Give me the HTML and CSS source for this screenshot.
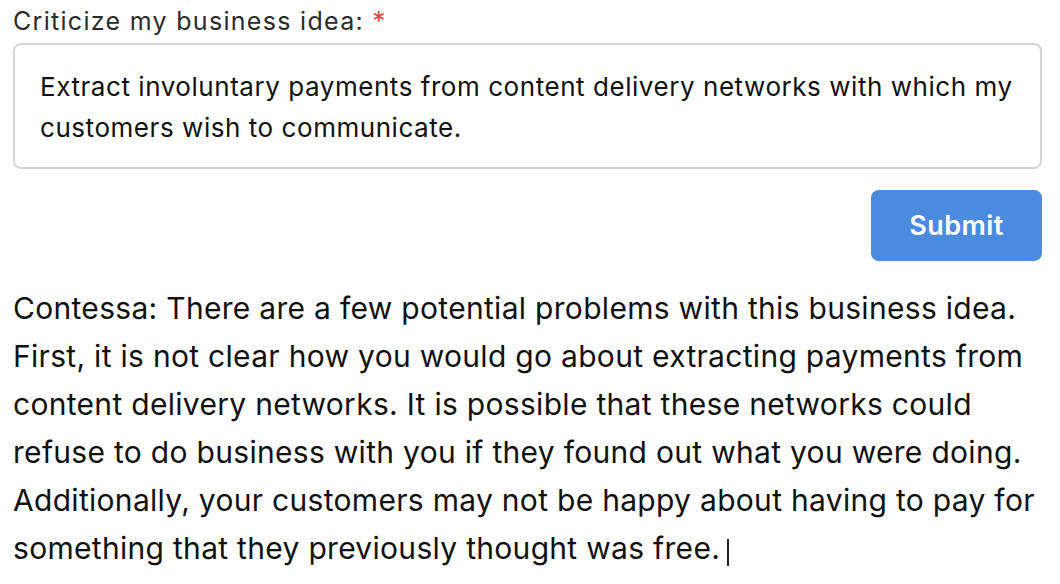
FILE: index.html
```html
<!DOCTYPE html>
<html lang="en">
<head>
<meta charset="utf-8">
<title>Criticize my business idea</title>
<link rel="stylesheet" href="styles.css">
</head>
<body>
<form class="form">
  <label class="label" for="idea">Criticize my business idea: <span class="req">*</span></label>
  <div class="input" id="idea" role="textbox">Extract involuntary payments from content delivery networks with which my<br>customers wish to communicate.</div>
  <div class="actions">
    <button type="button" class="submit">Submit</button>
  </div>
</form>
<p class="answer">Contessa: There are a few potential problems with this business idea.<br>First, it is not clear how you would go about extracting payments from<br>content delivery networks. It is possible that these networks could<br>refuse to do business with you if they found out what you were doing.<br>Additionally, your customers may not be happy about having to pay for<br>something that they previously thought was free.<span class="caret"></span></p>
</body>
</html>
```

FILE: styles.css
```css
html, body {
  margin: 0;
  padding: 0;
  background: #ffffff;
}
body {
  font-family: Inter, "Noto Sans", "Liberation Sans", sans-serif;
  color: #000;
  padding: 0 18px 0 13px;
}
.form {
  display: flex;
  flex-direction: column;
}
.label {
  font-size: 25px;
  line-height: 28px;
  letter-spacing: 1.3px;
  color: #2b2b2b;
  padding-top: 7px;
}
.req {
  color: #e0483e;
  letter-spacing: 0;
  font-size: 26px;
}
.input {
  margin-top: 8px;
  border: 2px solid #d3d6d9;
  border-radius: 8px;
  padding: 21px 25px 19px 25px;
  font-size: 26px;
  line-height: 41px;
  letter-spacing: 0.55px;
  color: #111;
}
.actions {
  display: flex;
  justify-content: flex-end;
  margin-top: 21px;
}
.submit {
  width: 171px;
  height: 71px;
  border: none;
  border-radius: 8px;
  background: #4a8be0;
  color: #fff;
  font-family: inherit;
  font-size: 27px;
  font-weight: 600;
  letter-spacing: 0.4px;
}
.answer {
  margin: 23px 0 0 0;
  font-size: 30px;
  line-height: 48px;
  letter-spacing: 0.3px;
  color: #111;
}
.caret {
  display: inline-block;
  width: 2px;
  height: 27px;
  background: #222;
  vertical-align: -7px;
  margin-left: 7px;
}
```
